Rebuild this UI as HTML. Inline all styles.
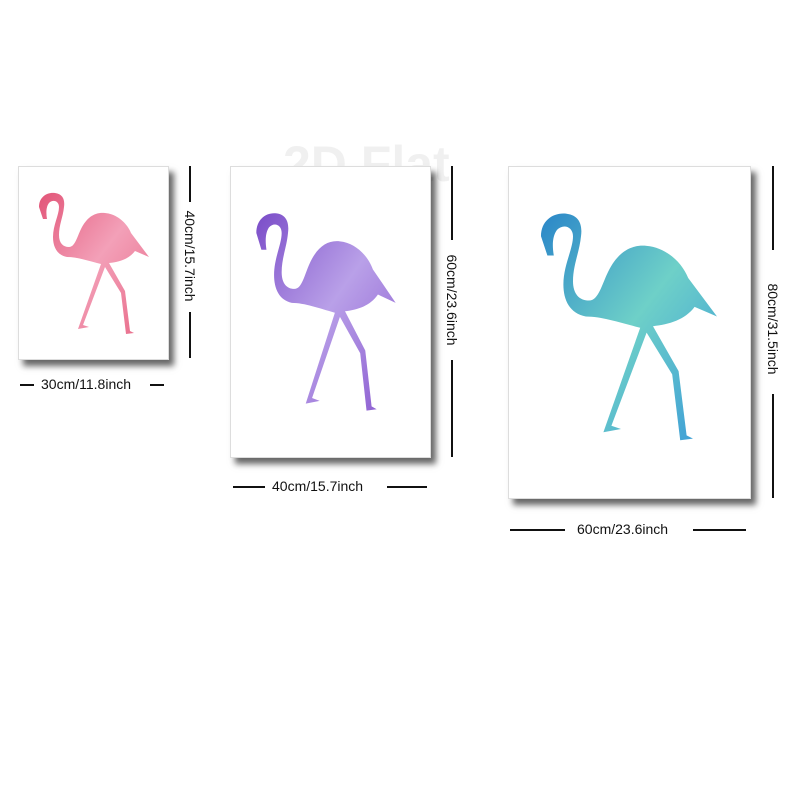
<!DOCTYPE html><html><head><style>
body{margin:0;width:800px;height:800px;background:#fff;position:relative;overflow:hidden;font-family:"Liberation Sans",sans-serif}
.f{position:absolute;background:#fff;border:1px solid #ddd;box-shadow:5px 6px 6px rgba(0,0,0,.6)}
.f svg{position:absolute}
.t{position:absolute;font-size:14px;color:#111;white-space:nowrap}
.h{position:absolute;height:2px;background:#111}
.v{position:absolute;width:2px;background:#111}
.r{position:absolute;transform:rotate(90deg);transform-origin:center}
</style></head><body>
<svg width="0" height="0" style="position:absolute"><defs>
<path id="fl" d="M24,52 L20,40 C20,30 28,25 36,26 C44,27 46,33 45,40 C44,50 40,58 40,68 C40,76 44,80 50,80 C56,80 58,70 62,62 C68,50 76,45 86,46 C98,47 108,56 112,66 L130,90 L116,84 C110,92 100,95 90,96 L106,124 L111,164 L115,166 L107,167 L102,126 L86,100 L64,158 L70,160 L59,162 L82,97 C70,94 58,90 48,90 C38,88 34,80 34,70 C34,58 40,48 40,40 C40,34 34,32 30,36 C27,40 27,46 28,52 Z"/>
<linearGradient id="gp" x1="0" y1="0" x2="1" y2="1"><stop offset="0" stop-color="#e25578"/><stop offset=".5" stop-color="#f3a0b8"/><stop offset="1" stop-color="#e86a88"/></linearGradient>
<linearGradient id="gv" x1="0" y1="0" x2="1" y2="1"><stop offset="0" stop-color="#7a4cc8"/><stop offset=".5" stop-color="#b9a0e8"/><stop offset="1" stop-color="#8a5ad0"/></linearGradient>
<linearGradient id="gb" x1="0" y1="0" x2="1" y2="1"><stop offset="0" stop-color="#2a86c8"/><stop offset=".5" stop-color="#6ed0c8"/><stop offset="1" stop-color="#3a9ad8"/></linearGradient>
</defs></svg>
<div class="t" style="left:283px;top:135px;font-size:50px;color:rgba(0,0,0,.06);font-weight:bold">2D Flat</div>

<div class="f" style="left:18px;top:166px;width:149px;height:192px"><svg width="150" height="193" viewBox="0 0 150 193" style="left:0;top:0"><use href="#fl" fill="url(#gp)"/></svg></div>
<div class="f" style="left:230px;top:166px;width:199px;height:290px"><svg width="190" height="270" viewBox="0 0 150 193" preserveAspectRatio="none" style="left:0;top:10px"><use href="#fl" fill="url(#gv)"/></svg></div>
<div class="f" style="left:508px;top:166px;width:241px;height:331px"><svg width="240" height="310" viewBox="0 0 150 193" preserveAspectRatio="none" style="left:0;top:5px"><use href="#fl" fill="url(#gb)"/></svg></div>

<div class="h" style="left:20px;top:384px;width:14px"></div><div class="t" style="left:41px;top:376px">30cm/11.8inch</div><div class="h" style="left:150px;top:384px;width:14px"></div>
<div class="v" style="left:189px;top:166px;height:36px"></div><div class="t r" style="left:140px;top:248px;width:100px;text-align:center">40cm/15.7inch</div><div class="v" style="left:189px;top:312px;height:46px"></div>

<div class="h" style="left:233px;top:486px;width:32px"></div><div class="t" style="left:272px;top:478px">40cm/15.7inch</div><div class="h" style="left:387px;top:486px;width:40px"></div>
<div class="v" style="left:451px;top:166px;height:74px"></div><div class="t r" style="left:402px;top:292px;width:100px;text-align:center">60cm/23.6inch</div><div class="v" style="left:451px;top:360px;height:97px"></div>

<div class="h" style="left:510px;top:529px;width:55px"></div><div class="t" style="left:577px;top:521px">60cm/23.6inch</div><div class="h" style="left:693px;top:529px;width:53px"></div>
<div class="v" style="left:772px;top:166px;height:84px"></div><div class="t r" style="left:723px;top:321px;width:100px;text-align:center">80cm/31.5inch</div><div class="v" style="left:772px;top:394px;height:104px"></div>
</body></html>
